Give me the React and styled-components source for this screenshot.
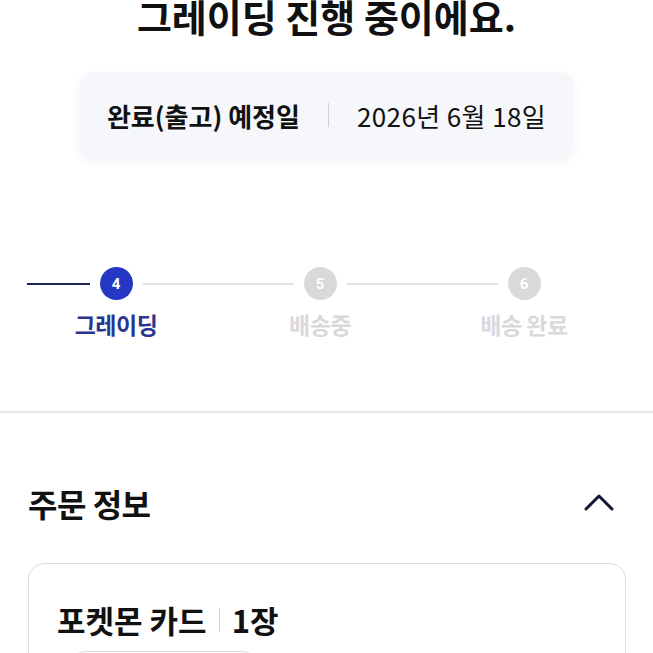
import React from "react";
import styled, { createGlobalStyle } from "styled-components";

const GlobalStyle = createGlobalStyle`
  body {
    margin: 0;
    background: #ffffff;
    font-family: "Noto Sans CJK KR", "Noto Sans", sans-serif;
    color: #111111;
  }
`;

const Page = styled.div`
  width: 653px;
  overflow: hidden;
`;

const Header = styled.section`
  display: flex;
  flex-direction: column;
  align-items: center;
  padding-bottom: 109px;
`;

const Title = styled.h1`
  margin: -6px 0 0;
  font-size: 38px;
  line-height: 44px;
  font-weight: 700;
  color: #111111;
`;

const DateBox = styled.div`
  margin-top: 34px;
  height: 86px;
  display: inline-flex;
  align-items: center;
  padding: 0 28px;
  background: #f6f7fb;
  border-radius: 14px;
  box-shadow: 0 4px 10px rgba(30, 40, 90, 0.05);
  font-size: 26px;
`;

const DateLabel = styled.span`
  font-weight: 700;
`;

const VBar = styled.span`
  width: 1px;
  height: ${(p) => p.$h || 24}px;
  background: #cfcfd4;
  margin: 0 ${(p) => p.$gap || 28}px;
`;

const DateValue = styled.span`
  font-weight: 400;
  letter-spacing: 0.4px;
`;

const Stepper = styled.div`
  display: flex;
  padding: 0 27px 0 14px;
  height: 144px;
`;

const Step = styled.div`
  flex: 1;
  display: flex;
  flex-direction: column;
  align-items: center;
`;

const Track = styled.div`
  width: 100%;
  display: flex;
  align-items: center;
  gap: 10px;
`;

const lineColor = (kind) =>
  kind === "done" ? "#1d2657" : kind === "todo" ? "#e2e2e6" : "transparent";

const Line = styled.div`
  flex: 1;
  height: 2px;
  background: linear-gradient(
    to right,
    transparent ${(p) => p.$inset || 0}px,
    ${(p) => lineColor(p.$kind)} ${(p) => p.$inset || 0}px
  );
`;

const Dot = styled.div`
  width: 33px;
  height: 33px;
  border-radius: 50%;
  display: flex;
  align-items: center;
  justify-content: center;
  background: ${(p) => (p.$active ? "#2538c4" : "#d9d9dc")};
  color: #ffffff;
  font-size: 15px;
  font-weight: 700;
  font-family: "Roboto", "Noto Sans", sans-serif;
`;

const StepLabel = styled.div`
  margin-top: 7px;
  font-size: 23px;
  font-weight: 700;
  letter-spacing: -0.5px;
  color: ${(p) => (p.$active ? "#2a3590" : "#d9d9dc")};
`;

const Divider = styled.hr`
  margin: 0;
  border: none;
  height: 2px;
  background: #e6e6e8;
`;

const Section = styled.section`
  padding: 0 27px 0 28px;
`;

const SectionHead = styled.div`
  display: flex;
  align-items: center;
  justify-content: space-between;
  box-sizing: border-box;
  height: 150px;
  padding-top: 30px;
`;

const SectionTitle = styled.h2`
  margin: 0;
  font-size: 32px;
  font-weight: 700;
  letter-spacing: -0.5px;
`;

const Chevron = styled.svg`
  margin-right: 11px;
  margin-top: 0;
`;

const Card = styled.div`
  border: 1px solid #dedee2;
  border-radius: 16px;
  padding: 33px 28px 0;
  height: 120px;
  box-sizing: border-box;
`;

const CardTitle = styled.div`
  display: flex;
  align-items: center;
  font-size: 31px;
  font-weight: 700;
  letter-spacing: 0;
`;

const Thumb = styled.div`
  margin: 9px 0 0 16px;
  width: 180px;
  height: 60px;
  border: 1px solid #dedee2;
  border-radius: 12px;
`;

function StepItem({ n, label, left, right, active, inset }) {
  return (
    <Step>
      <Track>
        <Line $kind={left} $inset={inset} />
        <Dot $active={active}>{n}</Dot>
        <Line $kind={right} />
      </Track>
      <StepLabel $active={active}>{label}</StepLabel>
    </Step>
  );
}

export default function App() {
  return (
    <Page>
      <GlobalStyle />
      <Header>
        <Title>그레이딩 진행 중이에요.</Title>
        <DateBox>
          <DateLabel>완료(출고) 예정일</DateLabel>
          <VBar />
          <DateValue>2026년 6월 18일</DateValue>
        </DateBox>
      </Header>

      <Stepper>
        <StepItem n="4" label="그레이딩" left="done" right="todo" active inset={13} />
        <StepItem n="5" label="배송중" left="todo" right="todo" />
        <StepItem n="6" label="배송 완료" left="todo" right="none" />
      </Stepper>

      <Divider />

      <Section>
        <SectionHead>
          <SectionTitle>주문 정보</SectionTitle>
          <Chevron width="32" height="20" viewBox="0 0 32 20" fill="none">
            <path
              d="M3 16 L16 3 L29 16"
              stroke="#14143a"
              strokeWidth="3"
              strokeLinecap="round"
              strokeLinejoin="round"
            />
          </Chevron>
        </SectionHead>
        <Card>
          <CardTitle>
            포켓몬 카드
            <VBar $h={24} $gap={12} />
            1장
          </CardTitle>
          <Thumb />
        </Card>
      </Section>
    </Page>
  );
}
